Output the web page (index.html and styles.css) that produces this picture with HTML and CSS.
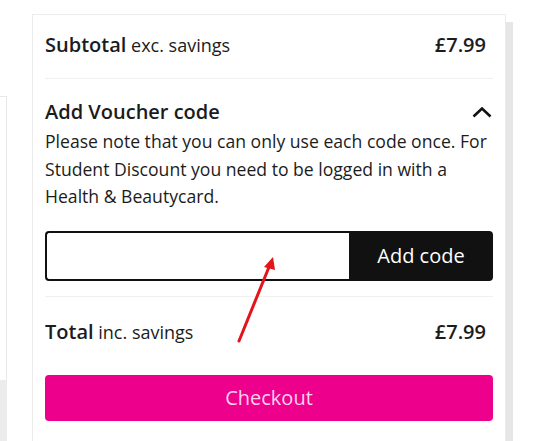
FILE: index.html
```
<!DOCTYPE html>
<html lang="en">
<head>
<meta charset="utf-8">
<title>Basket summary</title>
<link rel="stylesheet" href="styles.css">
</head>
<body>
<div class="page">
  <div class="left">
    <div class="left-panel"></div>
    <div class="left-gray"></div>
  </div>
  <div class="card">
    <div class="row row-sub">
      <div class="label"><span class="strong">Subtotal</span> exc. savings</div>
      <div class="price">£7.99</div>
    </div>
    <div class="voucher">
      <div class="voucher-head">
        <h2 class="voucher-title">Add Voucher code</h2>
        <svg class="chevron" width="20" height="12" viewBox="0 0 20 12" aria-hidden="true"><path d="M1.5 10.5 L10 2.5 L18.5 10.5" fill="none" stroke="#111" stroke-width="2.6"/></svg>
      </div>
      <p class="voucher-note">Please note that you can only use each code once. For Student Discount you need to be logged in with a Health &amp; Beautycard.</p>
      <form class="voucher-form">
        <input class="voucher-input" type="text" aria-label="Voucher code">
        <button class="voucher-btn" type="button">Add code</button>
      </form>
    </div>
    <div class="row row-total">
      <div class="label"><span class="strong">Total</span> inc. savings</div>
      <div class="price">£7.99</div>
    </div>
    <button class="checkout" type="button">Checkout</button>
    <svg class="arrow" width="60" height="100" viewBox="0 0 60 100" aria-hidden="true">
      <line x1="6" y1="92" x2="36" y2="18" stroke="#e3141b" stroke-width="3" stroke-linecap="round"/>
      <polygon points="40,8 31,18 42,21" fill="#e3141b"/>
    </svg>
  </div>
  <div class="rail"></div>
</div>
</body>
</html>
```

FILE: styles.css
```
* { box-sizing: border-box; }
html, body { margin: 0; padding: 0; background: #fff; }
body {
  font-family: "Open Sans", "Noto Sans", sans-serif;
  color: #1c1c1c;
  width: 535px;
  height: 441px;
  overflow: hidden;
}
.page {
  display: flex;
  align-items: stretch;
  height: 441px;
}
.left {
  width: 7px;
  margin-top: 96px;
  display: flex;
  flex-direction: column;
}
.left-panel {
  height: 284px;
  border-top: 1px solid #e8e8e8;
  border-right: 1px solid #e8e8e8;
}
.left-gray {
  flex: 1;
  background: #ececec;
}
.card {
  position: relative;
  margin-left: 25px;
  margin-top: 14px;
  width: 474px;
  border: 1px solid #ececec;
  border-bottom: none;
  padding: 0 12px;
}
.rail {
  width: 7px;
  margin-top: 22px;
  background: #e6e6e6;
}
.row {
  display: flex;
  align-items: center;
  justify-content: space-between;
}
.row-sub {
  height: 64px;
  padding-bottom: 4px;
  border-bottom: 1px solid #f0f0f0;
}
.row-total {
  height: 78px;
  padding-bottom: 8px;
}
.label { font-size: 18px; }
.strong { font-weight: 600; font-size: 20px; }
.price { font-weight: 600; font-size: 20px; margin-right: 7px; }
.voucher {
  border-bottom: 1px solid #f0f0f0;
  padding: 20px 0 15px;
}
.voucher-head {
  display: flex;
  align-items: center;
  justify-content: space-between;
}
.voucher-title {
  margin: 0;
  font-size: 20px;
  font-weight: 600;
  line-height: 26px;
}
.chevron { display: block; margin-right: 1px; }
.voucher-note {
  margin: 3px 0 0;
  font-size: 17.6px;
  line-height: 27.5px;
}
.voucher-form {
  display: flex;
  margin-top: 20px;
  height: 50px;
}
.voucher-input {
  flex: 1;
  min-width: 0;
  border: 2px solid #111;
  border-right: none;
  border-radius: 4px 0 0 4px;
  font: inherit;
  padding: 0 12px;
  outline: none;
}
.voucher-btn {
  width: 144px;
  border: none;
  background: #111;
  color: #fff;
  border-radius: 0 4px 4px 0;
  font-family: inherit;
  font-size: 20px;
  cursor: pointer;
}
.checkout {
  display: block;
  width: 100%;
  height: 46px;
  border: none;
  border-radius: 4px;
  background: #ec008c;
  color: #fcd3ec;
  font-family: inherit;
  font-size: 20px;
  cursor: pointer;
}
.arrow {
  position: absolute;
  left: 200px;
  top: 234px;
}
```
